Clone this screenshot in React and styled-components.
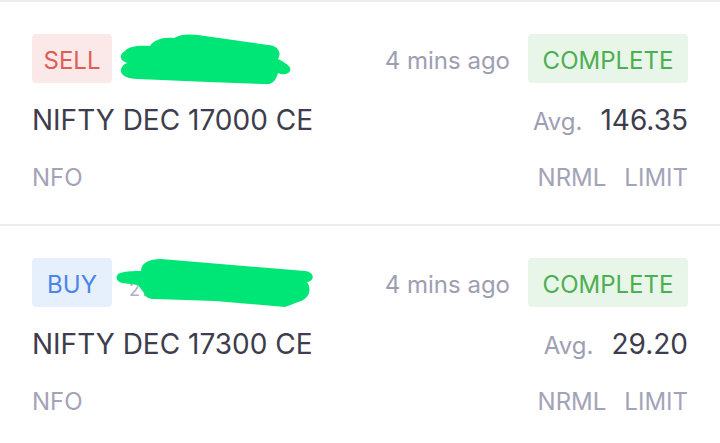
import React from "react";
import styled, { createGlobalStyle } from "styled-components";

const Global = createGlobalStyle`
  html, body { margin: 0; padding: 0; background: #ffffff; }
  body { font-family: Inter, "Noto Sans", sans-serif; -webkit-font-smoothing: antialiased; }
`;

const List = styled.div`
  width: 720px;
  background: #ffffff;
`;

const Card = styled.div`
  box-sizing: border-box;
  border-top: 2px solid #ececec;
  padding: 32px 32px 0 32px;
  height: 224px;
`;

const Row = styled.div`
  display: flex;
  align-items: ${(p) => p.$align || "center"};
  justify-content: space-between;
  height: ${(p) => p.$h}px;
  margin-top: ${(p) => p.$mt || 0}px;
`;

const Group = styled.div`
  display: flex;
  align-items: ${(p) => p.$align || "center"};
  position: relative;
`;

const tones = {
  sell: { bg: "#fbe9e9", fg: "#e15b55" },
  buy: { bg: "#e6effc", fg: "#4a86e8" },
  done: { bg: "#e8f5e9", fg: "#4caf50" },
};

const Badge = styled.span`
  display: inline-flex;
  align-items: center;
  justify-content: center;
  box-sizing: border-box;
  width: ${(p) => p.$w}px;
  height: 49px;
  padding-top: 5px;
  border-radius: 4px;
  background: ${(p) => tones[p.$tone].bg};
  color: ${(p) => tones[p.$tone].fg};
  font-size: 24px;
  line-height: 1;
`;

const OrderId = styled.span`
  align-self: flex-end;
  font-size: 18px;
  color: #b0b0c0;
  margin: 0 0 7px 17px;
`;

const Scribble = styled.svg`
  position: absolute;
  overflow: visible;
`;

const Time = styled.span`
  font-size: 24px;
  color: #9e9eb3;
  margin: 4px 18px 0 0;
`;

const Name = styled.span`
  font-size: 28px;
  line-height: 36px;
  color: #3d3d4d;
`;

const AvgLabel = styled.span`
  font-size: 24px;
  color: #9e9eb3;
  margin-right: 18px;
`;

const Price = styled.span`
  font-size: 28px;
  line-height: 36px;
  color: #3d3d4d;
`;

const Meta = styled.span`
  font-size: 24px;
  line-height: 30px;
  color: #a3a3b8;
  margin-left: ${(p) => p.$ml || 0}px;
`;

// hand-drawn marker strokes laid over the order number
const strokes = {
  a: "M7 18 C10 13 22 12 32 13 C36 7 44 4 56 5 C62 1 72 1 80 2 L150 12 C160 12 164 20 160 26 C168 30 174 34 172 38 C170 42 164 42 160 40 C158 48 154 52 146 51 L90 49 L20 46 C6 46 0 40 4 34 C6 31 8 30 10 30 C2 28 0 22 7 18 Z",
  b: "M5 16 C12 14 20 14 26 14 C26 6 34 2 46 2 L190 14 C200 15 200 24 192 25 C196 30 196 40 186 44 C180 46 176 48 170 50 L100 44 L40 42 C34 42 30 40 29 36 L23 28 L7 26 C0 24 0 18 5 16 Z",
};

function OrderCard({ side, name, price, id, stroke, box }) {
  return (
    <Card>
      <Row $h={49}>
        <Group>
          <Badge $tone={side === "SELL" ? "sell" : "buy"} $w={80}>
            {side}
          </Badge>
          <OrderId>{id}</OrderId>
          <Scribble
            width={box.w}
            height={box.h}
            viewBox={`0 0 ${box.w} ${box.h}`}
            style={{ left: box.x, top: box.y }}
          >
            <path d={strokes[stroke]} fill="#00e676" />
          </Scribble>
        </Group>
        <Group>
          <Time>4 mins ago</Time>
          <Badge $tone="done" $w={160}>COMPLETE</Badge>
        </Group>
      </Row>
      <Row $h={36} $mt={19} $align="baseline">
        <Name>{name}</Name>
        <Group $align="baseline">
          <AvgLabel>Avg.</AvgLabel>
          <Price>{price}</Price>
        </Group>
      </Row>
      <Row $h={30} $mt={25} $align="baseline">
        <Meta>NFO</Meta>
        <Group $align="baseline">
          <Meta>NRML</Meta>
          <Meta $ml={18}>LIMIT</Meta>
        </Group>
      </Row>
    </Card>
  );
}

export default function App() {
  return (
    <>
      <Global />
      <List>
        <OrderCard
          side="SELL"
          name="NIFTY DEC 17000 CE"
          price="146.35"
          id="211220002"
          stroke="a"
          box={{ x: 86, y: -1, w: 176, h: 54 }}
        />
        <OrderCard
          side="BUY"
          name="NIFTY DEC 17300 CE"
          price="29.20"
          id="211220001"
          stroke="b"
          box={{ x: 83, y: -1, w: 200, h: 54 }}
        />
      </List>
    </>
  );
}
